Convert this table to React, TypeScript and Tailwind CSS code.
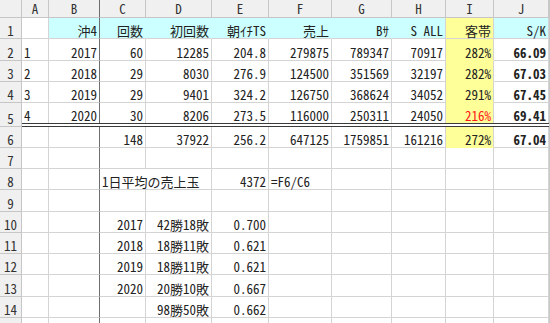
type Cell = {
  t?: string;
  r?: boolean;
  bg?: "c" | "y";
  b?: boolean;
  red?: boolean;
  span?: number;
};

const widths = [27, 51, 46, 66, 57, 63, 60, 54, 48, 55];

const rows: { h: number; cells: Cell[]; dbl?: boolean }[] = [
  {
    h: 21,
    cells: [
      {},
      { t: "沖4", r: true, bg: "c" },
      { t: "回数", r: true, bg: "c" },
      { t: "初回数", r: true, bg: "c" },
      { t: "朝ｲﾁTS", r: true, bg: "c" },
      { t: "売上", r: true, bg: "c" },
      { t: "Bｻ", r: true, bg: "c" },
      { t: "S ALL", r: true, bg: "c" },
      { t: "客帯", r: true, bg: "y" },
      { t: "S/K", r: true, bg: "c" },
    ],
  },
  {
    h: 22,
    cells: [
      { t: "1" },
      { t: "2017", r: true },
      { t: "60", r: true },
      { t: "12285", r: true },
      { t: "204.8", r: true },
      { t: "279875", r: true },
      { t: "789347", r: true },
      { t: "70917", r: true },
      { t: "282%", r: true, bg: "y" },
      { t: "66.09", r: true, b: true },
    ],
  },
  {
    h: 21,
    cells: [
      { t: "2" },
      { t: "2018", r: true },
      { t: "29", r: true },
      { t: "8030", r: true },
      { t: "276.9", r: true },
      { t: "124500", r: true },
      { t: "351569", r: true },
      { t: "32197", r: true },
      { t: "282%", r: true, bg: "y" },
      { t: "67.03", r: true, b: true },
    ],
  },
  {
    h: 21,
    cells: [
      { t: "3" },
      { t: "2019", r: true },
      { t: "29", r: true },
      { t: "9401", r: true },
      { t: "324.2", r: true },
      { t: "126750", r: true },
      { t: "368624", r: true },
      { t: "34052", r: true },
      { t: "291%", r: true, bg: "y" },
      { t: "67.45", r: true, b: true },
    ],
  },
  {
    h: 24,
    dbl: true,
    cells: [
      { t: "4" },
      { t: "2020", r: true },
      { t: "30", r: true },
      { t: "8206", r: true },
      { t: "273.5", r: true },
      { t: "116000", r: true },
      { t: "250311", r: true },
      { t: "24050", r: true },
      { t: "216%", r: true, bg: "y", red: true },
      { t: "69.41", r: true, b: true },
    ],
  },
  {
    h: 21,
    cells: [
      {},
      {},
      { t: "148", r: true },
      { t: "37922", r: true },
      { t: "256.2", r: true },
      { t: "647125", r: true },
      { t: "1759851", r: true },
      { t: "161216", r: true },
      { t: "272%", r: true, bg: "y" },
      { t: "67.04", r: true, b: true },
    ],
  },
  { h: 21, cells: [{}, {}, {}, {}, {}, {}, {}, {}, {}, {}] },
  {
    h: 21,
    cells: [
      {},
      {},
      { t: "1日平均の売上玉", span: 2 },
      { t: "4372", r: true },
      { t: "=F6/C6" },
      {},
      {},
      {},
      {},
    ],
  },
  { h: 22, cells: [{}, {}, {}, {}, {}, {}, {}, {}, {}, {}] },
  {
    h: 21,
    cells: [{}, {}, { t: "2017", r: true }, { t: "42勝18敗", r: true }, { t: "0.700", r: true }, {}, {}, {}, {}, {}],
  },
  {
    h: 21,
    cells: [{}, {}, { t: "2018", r: true }, { t: "18勝11敗", r: true }, { t: "0.621", r: true }, {}, {}, {}, {}, {}],
  },
  {
    h: 21,
    cells: [{}, {}, { t: "2019", r: true }, { t: "18勝11敗", r: true }, { t: "0.621", r: true }, {}, {}, {}, {}, {}],
  },
  {
    h: 22,
    cells: [{}, {}, { t: "2020", r: true }, { t: "20勝10敗", r: true }, { t: "0.667", r: true }, {}, {}, {}, {}, {}],
  },
  {
    h: 21,
    cells: [{}, {}, {}, { t: "98勝50敗", r: true }, { t: "0.662", r: true }, {}, {}, {}, {}, {}],
  },
  { h: 6, cells: [{}, {}, {}, {}, {}, {}, {}, {}, {}, {}] },
];

const font = {
  fontFamily: "'Noto Sans Mono CJK JP', 'Noto Sans CJK JP', 'DejaVu Sans Mono', monospace",
};

function Row({ n, h, cells, dbl, first }: { n: number; h: number; cells: Cell[]; dbl?: boolean; first?: boolean }) {
  let col = 0;
  return (
    <div className="flex" style={{ height: h }}>
      <div className="flex w-[22px] shrink-0 items-end justify-center border-r border-b border-[#c6c6c6] bg-[#f0f0f0] pb-[1px] text-[#333]">
        {n < 15 ? n : ""}
      </div>
      <div className={`flex ${dbl ? "border-b-4 border-double border-[#3a3a3a]" : ""}`}>
        {cells.map((c, i) => {
          const start = col;
          const span = c.span ?? 1;
          col += span;
          const w = widths.slice(start, start + span).reduce((a, b) => a + b, 0);
          const bg = c.bg === "c" ? "bg-[#ccffff]" : c.bg === "y" ? "bg-[#ffff99]" : "bg-white";
          let sep = "border-r-[#d4d4d4]";
          if (start + span - 1 === 1) sep = "border-r-[#6e6e6e]";
          else if (c.bg === "c" && start < 7) sep = "border-r-[#ccffff]";
          let bottom = "border-b border-b-[#d4d4d4]";
          if (dbl) bottom = "";
          else if (c.bg === "y" && !first) bottom = "border-b border-b-[#ffff99]";
          return (
            <div
              key={i}
              className={`flex shrink-0 items-end overflow-visible whitespace-nowrap border-r ${sep} ${bottom} ${bg} pb-[1px] ${
                c.r ? "justify-end pr-[2px]" : "justify-start pl-[2px]"
              } ${c.b ? "font-bold" : ""} ${c.red ? "text-[#ff1a1a]" : "text-[#222]"}`}
              style={{ width: w }}
            >
              {c.t ?? ""}
            </div>
          );
        })}
      </div>
      <div className="w-[1px] bg-[#c8c8c8]" />
    </div>
  );
}

export default function App() {
  const letters = ["A", "B", "C", "D", "E", "F", "G", "H", "I", "J"];
  return (
    <div className="h-[323px] w-[550px] overflow-hidden bg-white text-[13px] leading-none" style={font}>
      <div className="flex h-[18px] bg-[#f0f0f0] text-[#333]">
        <div className="w-[22px] shrink-0 border-r border-b border-[#c6c6c6]" />
        {letters.map((l, i) => (
          <div
            key={l}
            className={`flex shrink-0 items-center justify-center border-r border-b border-[#c6c6c6] ${
              i === 1 ? "border-r-[#6e6e6e]" : ""
            }`}
            style={{ width: widths[i] }}
          >
            {l}
          </div>
        ))}
        <div className="w-[1px] border-b border-[#c6c6c6] bg-[#c8c8c8]" />
      </div>
      {rows.map((r, i) => (
        <Row key={i} n={i + 1} h={r.h} cells={r.cells} dbl={r.dbl} first={i === 0} />
      ))}
    </div>
  );
}
